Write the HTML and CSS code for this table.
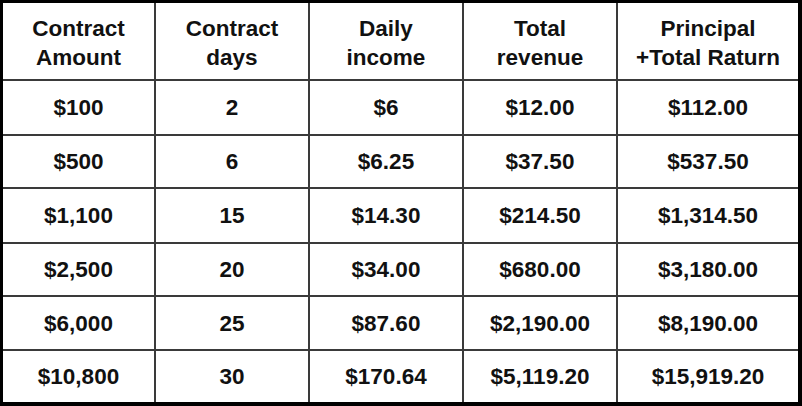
FILE: index.html
```html
<!DOCTYPE html>
<html lang="en">
<head>
<meta charset="utf-8">
<title>Contract table</title>
<link rel="stylesheet" href="styles.css">
</head>
<body>
<div class="table">
  <div class="cell head">Contract<br>Amount</div>
  <div class="cell head">Contract<br>days</div>
  <div class="cell head">Daily<br>income</div>
  <div class="cell head">Total<br>revenue</div>
  <div class="cell head">Principal<br>+Total Raturn</div>

  <div class="cell">$100</div>
  <div class="cell">2</div>
  <div class="cell">$6</div>
  <div class="cell">$12.00</div>
  <div class="cell">$112.00</div>

  <div class="cell">$500</div>
  <div class="cell">6</div>
  <div class="cell">$6.25</div>
  <div class="cell">$37.50</div>
  <div class="cell">$537.50</div>

  <div class="cell">$1,100</div>
  <div class="cell">15</div>
  <div class="cell">$14.30</div>
  <div class="cell">$214.50</div>
  <div class="cell">$1,314.50</div>

  <div class="cell">$2,500</div>
  <div class="cell">20</div>
  <div class="cell">$34.00</div>
  <div class="cell">$680.00</div>
  <div class="cell">$3,180.00</div>

  <div class="cell">$6,000</div>
  <div class="cell">25</div>
  <div class="cell">$87.60</div>
  <div class="cell">$2,190.00</div>
  <div class="cell">$8,190.00</div>

  <div class="cell">$10,800</div>
  <div class="cell">30</div>
  <div class="cell">$170.64</div>
  <div class="cell">$5,119.20</div>
  <div class="cell">$15,919.20</div>
</div>
</body>
</html>
```

FILE: styles.css
```css
html, body {
  margin: 0;
  padding: 0;
  background: #fff;
}

.table {
  box-sizing: border-box;
  width: 802px;
  height: 406px;
  border-style: solid;
  border-color: #000;
  border-width: 3px 4px 4px 3px;
  background: #3a3a3a;
  display: grid;
  grid-template-columns: 151px 152px 152px 152px 180px;
  grid-template-rows: 76px 53px 51px 53px 51px 52px 51px;
  gap: 2px;
  font-family: "Liberation Sans", Arial, sans-serif;
  font-weight: bold;
  font-size: 22.5px;
  color: #111;
}

.cell {
  background: #fff;
  display: flex;
  align-items: center;
  justify-content: center;
  text-align: center;
  line-height: 29px;
}

.head {
  padding-top: 4px;
}
```
